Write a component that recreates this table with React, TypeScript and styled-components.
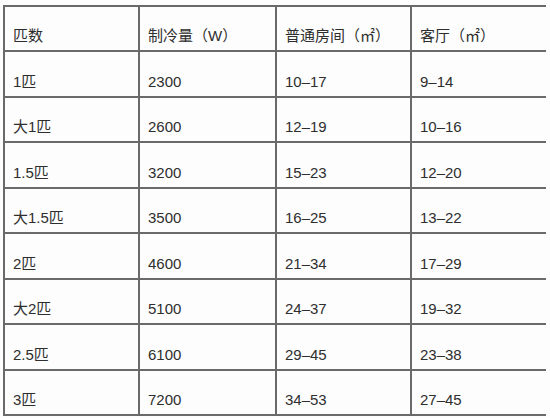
import React from "react";
import styled, { createGlobalStyle } from "styled-components";

const Global = createGlobalStyle`
  html, body { margin: 0; padding: 0; background: #fdfdfd; }
  body { font-family: "Liberation Sans", "Noto Sans CJK SC", sans-serif; }
`;

const Page = styled.div`
  width: 550px;
  height: 418px;
  padding: 5px 0 0 3px;
  box-sizing: border-box;
  background: #fdfdfd;
`;

const Grid = styled.div`
  display: grid;
  width: 543px;
  height: 411px;
  box-sizing: border-box;
  grid-template-columns: 133px 135px 133px 134px;
  grid-template-rows: repeat(9, 1fr);
  gap: 2px;
  padding: 2px;
  background: #6a6a6a;
  color: #2e2e2e;
  font-size: 15px;
`;

const Cell = styled.div`
  background: #fdfdfd;
  display: flex;
  align-items: flex-end;
  padding: 0 0 5px 8px;
  line-height: 18px;
  white-space: nowrap;
`;

const header = ["匹数", "制冷量（W）", "普通房间（㎡）", "客厅（㎡）"];
const rows: string[][] = [
  ["1匹", "2300", "10–17", "9–14"],
  ["大1匹", "2600", "12–19", "10–16"],
  ["1.5匹", "3200", "15–23", "12–20"],
  ["大1.5匹", "3500", "16–25", "13–22"],
  ["2匹", "4600", "21–34", "17–29"],
  ["大2匹", "5100", "24–37", "19–32"],
  ["2.5匹", "6100", "29–45", "23–38"],
  ["3匹", "7200", "34–53", "27–45"],
];

export default function App() {
  return (
    <Page>
      <Global />
      <Grid>
        {header.map((h) => (
          <Cell key={h}>{h}</Cell>
        ))}
        {rows.map((r) =>
          r.map((c, i) => <Cell key={r[0] + i}>{c}</Cell>)
        )}
      </Grid>
    </Page>
  );
}
